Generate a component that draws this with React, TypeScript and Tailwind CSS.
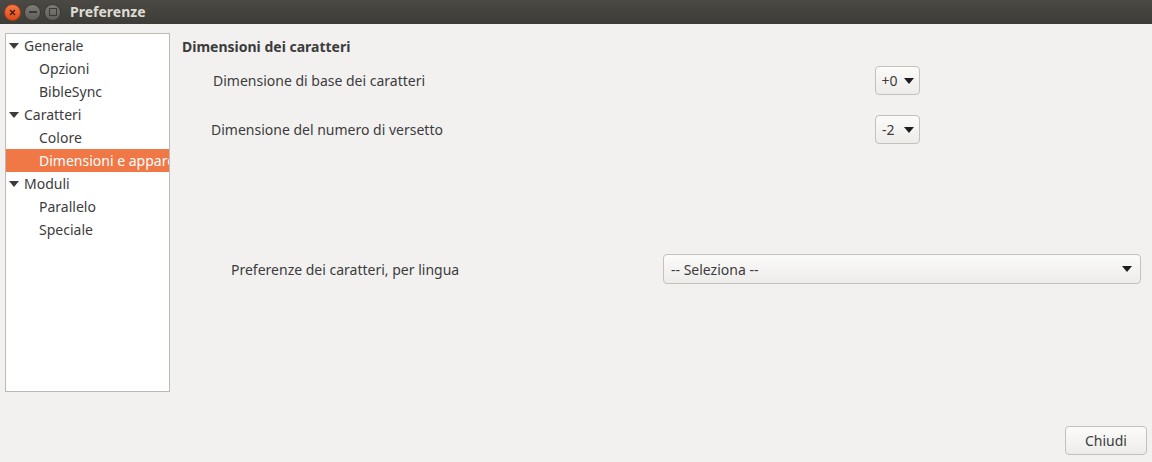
import React from "react";

const font = { fontFamily: '"Noto Sans", "Open Sans", sans-serif' };

function Tri() {
  return (
    <svg width="10" height="8" viewBox="0 0 10 8" className="shrink-0">
      <path d="M0 1 L10 1 L5 7 Z" fill="#3c3c3c" />
    </svg>
  );
}

function Caret() {
  return (
    <svg width="10" height="6" viewBox="0 0 10 6">
      <path d="M0 0 L10 0 L5 6 Z" fill="#1e1e1e" />
    </svg>
  );
}

type Row = { label: string; parent?: boolean; selected?: boolean };
const rows: Row[] = [
  { label: "Generale", parent: true },
  { label: "Opzioni" },
  { label: "BibleSync" },
  { label: "Caratteri", parent: true },
  { label: "Colore" },
  { label: "Dimensioni e apparenza", selected: true },
  { label: "Moduli", parent: true },
  { label: "Parallelo" },
  { label: "Speciale" },
];

export default function App() {
  return (
    <div className="w-[1152px] h-[462px] flex flex-col bg-[#f2f1f0] text-[14px] text-[#3c3c3c] overflow-hidden" style={font}>
      {/* Title bar */}
      <div className="h-[24px] shrink-0 bg-gradient-to-b from-[#4a4944] to-[#3d3c38] flex items-center pl-[4px]">
        <div className="flex items-center gap-[3px]">
          <div className="w-[17px] h-[17px] rounded-full bg-gradient-to-b from-[#f3784a] to-[#df4a16] flex items-center justify-center border border-[#a83a14]">
            <svg width="7" height="7" viewBox="0 0 7 7">
              <path d="M1 1 L6 6 M6 1 L1 6" stroke="#4a1a08" strokeWidth="1.3" />
            </svg>
          </div>
          <div className="w-[17px] h-[17px] rounded-full bg-gradient-to-b from-[#7d7c77] to-[#5f5e59] border border-[#3a3935] flex items-center justify-center">
            <div className="w-[8px] h-[1.5px] bg-[#3b3a36]" />
          </div>
          <div className="w-[17px] h-[17px] rounded-full bg-gradient-to-b from-[#7d7c77] to-[#5f5e59] border border-[#3a3935] flex items-center justify-center">
            <div className="w-[8px] h-[8px] border border-[#3b3a36]" />
          </div>
        </div>
        <div className="ml-[9px] text-[#dfdbd2] font-bold text-[14px] leading-none">Preferenze</div>
      </div>

      {/* Body */}
      <div className="flex-1 flex flex-col px-[5px] pt-[9px] pb-[7px]">
        <div className="flex flex-1">
          {/* Tree */}
          <div className="w-[165px] h-[359px] bg-white border border-[#bdb9b4] shrink-0 overflow-hidden">
            <div>
              {rows.map((r) => (
                <div
                  key={r.label}
                  className={
                    "h-[23px] flex items-center whitespace-nowrap " +
                    (r.selected ? "bg-[#f07746] text-white" : "")
                  }
                >
                  {r.parent ? (
                    <div className="flex items-center pl-[3px] gap-[5px]">
                      <Tri />
                      <span>{r.label}</span>
                    </div>
                  ) : (
                    <span className="pl-[33px]">{r.label}</span>
                  )}
                </div>
              ))}
            </div>
          </div>

          {/* Right */}
          <div className="flex-1 flex flex-col pl-[12px]">
            <div className="font-bold text-[14px] mt-[4px] leading-[20px]">Dimensioni dei caratteri</div>
            <div className="flex items-center justify-between mt-[9px] h-[29px]">
              <span className="pl-[31px]">Dimensione di base dei caratteri</span>
              <button className="mr-[227px] w-[45px] h-[29px] rounded-[4px] border border-[#c4c0bb] bg-gradient-to-b from-[#fbfbfa] to-[#edecea] flex items-center justify-center gap-[6px] text-[#3c3c3c]">
                <span>+0</span>
                <Caret />
              </button>
            </div>
            <div className="flex items-center justify-between mt-[20px] h-[29px]">
              <span className="pl-[29px]">Dimensione del numero di versetto</span>
              <button className="mr-[227px] w-[45px] h-[29px] rounded-[4px] border border-[#c4c0bb] bg-gradient-to-b from-[#fbfbfa] to-[#edecea] flex items-center pl-[6px] gap-[9px] text-[#3c3c3c]">
                <span>-2</span>
                <Caret />
              </button>
            </div>
            <div className="flex items-center mt-[110px] h-[30px]">
              <span className="pl-[49px] w-[481px]">Preferenze dei caratteri, per lingua</span>
              <div className="ml-auto mr-[6px] w-[478px] h-[30px] rounded-[4px] border border-[#c4c0bb] bg-gradient-to-b from-[#fbfbfa] to-[#edecea] flex items-center justify-between pl-[7px] pr-[8px]">
                <span>-- Seleziona --</span>
                <Caret />
              </div>
            </div>
          </div>
        </div>

        <div className="flex justify-end">
          <button className="w-[82px] h-[29px] rounded-[4px] border border-[#c4c0bb] bg-gradient-to-b from-[#fbfbfa] to-[#edecea] text-[#3c3c3c]">
            Chiudi
          </button>
        </div>
      </div>
    </div>
  );
}
